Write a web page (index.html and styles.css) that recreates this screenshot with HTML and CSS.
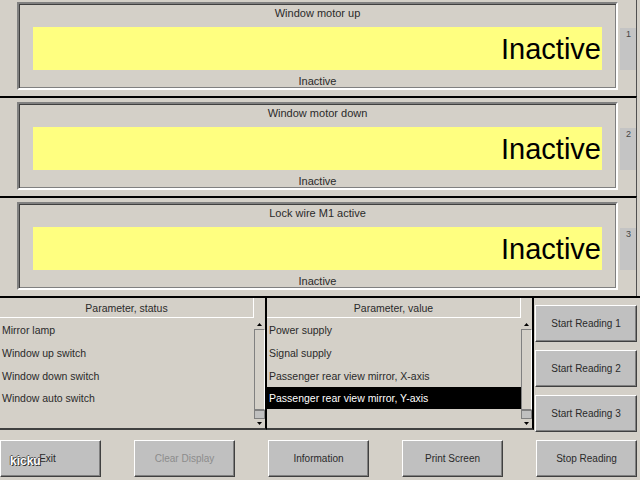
FILE: index.html
```html
<!DOCTYPE html>
<html>
<head>
<meta charset="utf-8">
<link rel="stylesheet" href="styles.css">
</head>
<body>
<div class="screen">
  <div class="readouts">
    <div class="row">
      <div class="frame">
        <div class="title">Window motor up</div>
        <div class="value">Inactive</div>
        <div class="status">Inactive</div>
      </div>
      <div class="tab">1</div>
    </div>
    <div class="row">
      <div class="frame">
        <div class="title">Window motor down</div>
        <div class="value">Inactive</div>
        <div class="status">Inactive</div>
      </div>
      <div class="tab">2</div>
    </div>
    <div class="row">
      <div class="frame">
        <div class="title">Lock wire M1 active</div>
        <div class="value">Inactive</div>
        <div class="status">Inactive</div>
      </div>
      <div class="tab">3</div>
    </div>
  </div>

  <div class="lists">
    <div class="panel">
      <div class="main">
        <div class="head">Parameter, status</div>
        <ul class="items">
          <li>Mirror lamp</li>
          <li>Window up switch</li>
          <li>Window down switch</li>
          <li>Window auto switch</li>
        </ul>
      </div>
      <div class="scroll">
        <div class="scroll-top"></div>
        <div class="arrow"><svg width="9" height="7" viewBox="0 0 9 7"><polygon points="2,5 7,5 4.5,2" fill="#000"/></svg></div>
        <div class="track"></div>
        <div class="thumb"></div>
        <div class="arrow"><svg width="9" height="7" viewBox="0 0 9 7"><polygon points="2,2 7,2 4.5,5" fill="#000"/></svg></div>
      </div>
    </div>
    <div class="panel">
      <div class="main">
        <div class="head">Parameter, value</div>
        <ul class="items">
          <li>Power supply</li>
          <li>Signal supply</li>
          <li>Passenger rear view mirror, X-axis</li>
          <li class="selected">Passenger rear view mirror, Y-axis</li>
        </ul>
      </div>
      <div class="scroll">
        <div class="scroll-top"></div>
        <div class="arrow"><svg width="9" height="7" viewBox="0 0 9 7"><polygon points="2,5 7,5 4.5,2" fill="#000"/></svg></div>
        <div class="track"></div>
        <div class="thumb"></div>
        <div class="arrow"><svg width="9" height="7" viewBox="0 0 9 7"><polygon points="2,2 7,2 4.5,5" fill="#000"/></svg></div>
      </div>
    </div>
    <div class="side">
      <div class="btn">Start Reading 1</div>
      <div class="btn">Start Reading 2</div>
      <div class="btn">Start Reading 3</div>
    </div>
  </div>

  <div class="actions">
    <div class="btn exit">Exit<span class="watermark">kicku</span></div>
    <div class="btn disabled">Clear Display</div>
    <div class="btn">Information</div>
    <div class="btn">Print Screen</div>
    <div class="btn">Stop Reading</div>
  </div>
</div>
</body>
</html>
```

FILE: styles.css
```css
html, body {
  margin: 0;
  padding: 0;
}
body {
  background: #d4d0c8;
  font-family: "Liberation Sans", Arial, sans-serif;
  color: #2a2a2a;
  width: 640px;
  height: 480px;
  overflow: hidden;
}
.screen {
  width: 640px;
  height: 480px;
}
.readouts {
  margin-top: -4px;
}
.row {
  box-sizing: border-box;
  width: 637px;
  height: 100px;
  border-top: 2px solid #000;
  border-right: 1px solid #505050;
  padding: 4px 0 0 17px;
  display: flex;
  align-items: flex-start;
}
.frame {
  box-sizing: border-box;
  width: 601px;
  height: 88px;
  border: 2px solid;
  border-color: #808080 #fff #fff #808080;
  box-shadow: inset 1px 1px #404040, inset -1px -1px #808080;
  display: flex;
  flex-direction: column;
}
.title {
  margin-top: 3px;
  height: 13px;
  line-height: 13px;
  font-size: 11px;
  text-align: center;
}
.value {
  margin: 7px 0 0 14px;
  width: 569px;
  height: 43px;
  line-height: 45px;
  background: #ffff80;
  font-size: 29px;
  color: #000;
  text-align: right;
  padding-right: 1px;
  box-sizing: border-box;
}
.status {
  margin-top: 5px;
  height: 13px;
  line-height: 13px;
  font-size: 11px;
  text-align: center;
}
.tab {
  margin: 26px 0 0 2px;
  width: 16px;
  height: 42px;
  background: #c4c4c4;
  font-size: 9px;
  color: #444;
  box-sizing: border-box;
  padding: 1px 0 0 6px;
}
.lists {
  display: flex;
  border-top: 2px solid #000;
  height: 134px;
}
.panel {
  box-sizing: border-box;
  width: 267px;
  height: 132px;
  border-right: 2px solid #000;
  border-bottom: 2px solid #404040;
  display: flex;
}
.main {
  width: 254px;
}
.head {
  height: 19px;
  line-height: 20px;
  border-bottom: 1px solid #fff;
  border-right: 1px solid #fff;
  font-size: 10.5px;
  text-align: center;
}
.items {
  list-style: none;
  margin: 0;
  padding: 1px 0 0 0;
}
.items li {
  height: 22px;
  line-height: 22px;
  font-size: 10.5px;
  padding-left: 2px;
  white-space: nowrap;
}
.items li:nth-child(-n+2) {
  height: 23px;
  line-height: 23px;
}
.items li.selected {
  background: #000;
  color: #fff;
}
.scroll {
  width: 11px;
  display: flex;
  flex-direction: column;
}
.scroll-top {
  height: 20px;
  flex: none;
}
.arrow {
  flex: none;
  height: 9px;
  margin-top: 2px;
  display: flex;
  justify-content: center;
  align-items: center;
}
.arrow:last-child {
  margin-top: 0;
}
.track {
  flex: 1;
  box-sizing: border-box;
  border: 1px solid #808080;
  border-right-color: #fff;
}
.thumb {
  flex: none;
  height: 9px;
  box-sizing: border-box;
  background: #c0c0c0;
  border: 1px solid #808080;
}
.side {
  width: 102px;
  margin-left: 1px;
  padding-top: 7px;
  display: flex;
  flex-direction: column;
  gap: 8px;
}
.btn {
  box-sizing: border-box;
  height: 37px;
  background: #c0c0c0;
  border: 1px solid;
  border-color: #fff #404040 #404040 #fff;
  box-shadow: inset -1px -1px #808080;
  font-size: 10px;
  color: #2a2a2a;
  display: flex;
  align-items: center;
  justify-content: center;
  position: relative;
}
.actions {
  margin-top: 8px;
  width: 637px;
  display: flex;
  justify-content: space-between;
}
.actions .btn {
  width: 101px;
}
.btn.exit {
  padding-right: 6px;
}
.btn.disabled {
  color: #8c8c8c;
}
.watermark {
  position: absolute;
  left: 9px;
  top: 13px;
  font-size: 12px;
  font-weight: bold;
  color: #fff;
  text-shadow: 1px 1px 0 #333, -1px 0 0 #555, 0 -1px 0 #555;
}
```
